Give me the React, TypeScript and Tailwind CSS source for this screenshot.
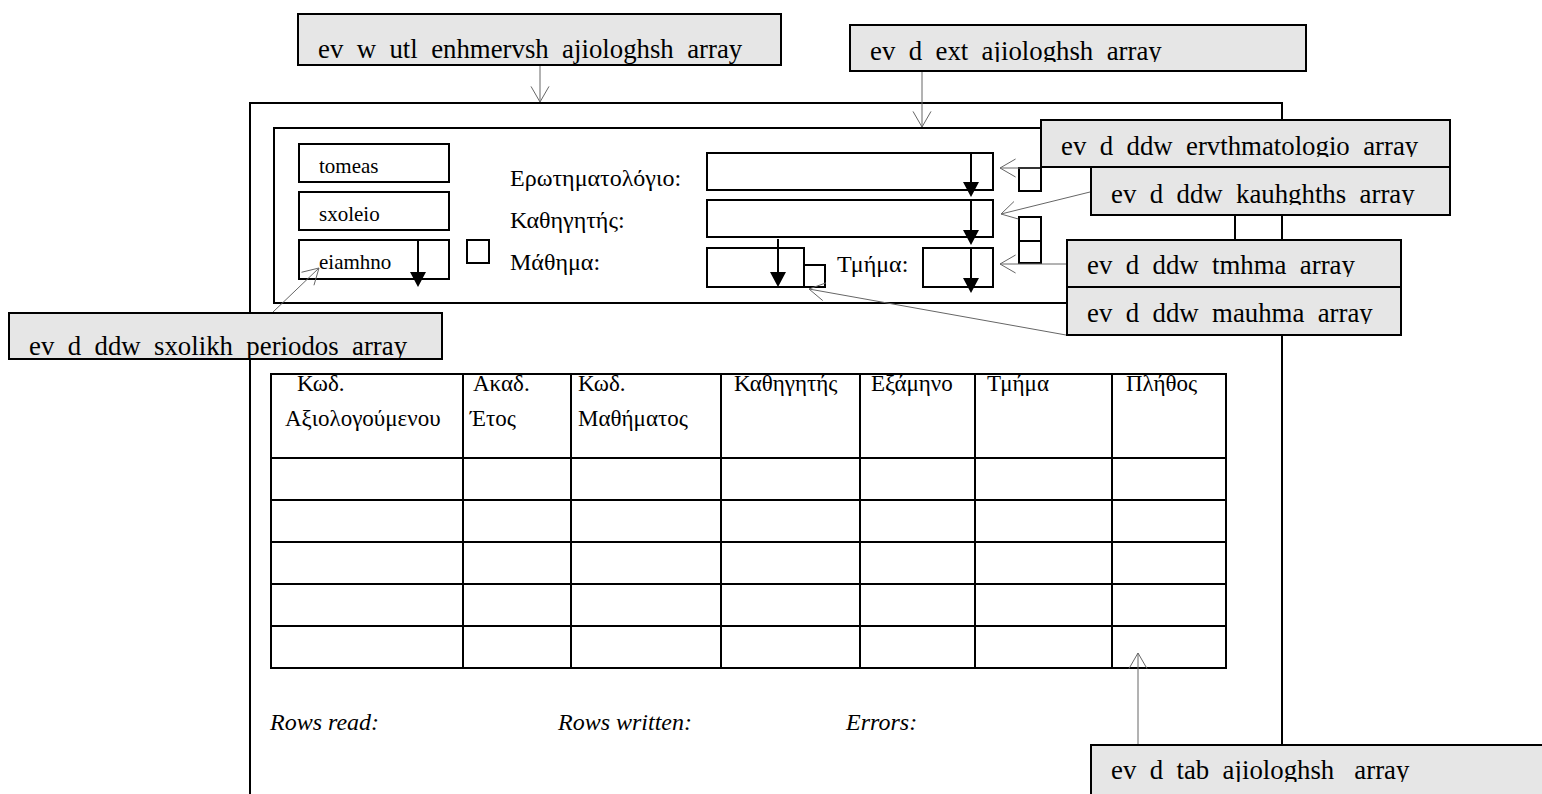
import React from "react";

type ArrowProps = { x1: number; y1: number; x2: number; y2: number };

function Connector({ x1, y1, x2, y2 }: ArrowProps) {
  const a = Math.atan2(y1 - y2, x1 - x2);
  const L = 18;
  const d = Math.PI / 6;
  const p1 = [x2 + L * Math.cos(a + d), y2 + L * Math.sin(a + d)];
  const p2 = [x2 + L * Math.cos(a - d), y2 + L * Math.sin(a - d)];
  return (
    <g stroke="#666" strokeWidth={1} fill="none">
      <line x1={x1} y1={y1} x2={x2} y2={y2} />
      <polyline points={`${p1[0]},${p1[1]} ${x2},${y2} ${p2[0]},${p2[1]}`} />
    </g>
  );
}

function DropArrow({ className, h }: { className: string; h: number }) {
  return (
    <svg
      className={`absolute overflow-visible ${className}`}
      width={16}
      height={h}
      viewBox={`0 0 16 ${h}`}
    >
      <line x1={8} y1={0} x2={8} y2={h - 14} stroke="#000" strokeWidth={2} />
      <polygon points={`0,${h - 15} 16,${h - 15} 8,${h}`} fill="#000" />
    </svg>
  );
}

function Callout({ box, inner, text }: { box: string; inner: string; text: string }) {
  return (
    <div className={`absolute border-2 border-black bg-[#e6e6e6] ${box}`}>
      <div className={`overflow-hidden whitespace-pre pl-[19px] text-[26.8px] leading-none ${inner}`}>
        {text}
      </div>
    </div>
  );
}

const headers: { l1: string; l2?: string; pad: string; pad2?: string }[] = [
  { l1: "Κωδ.", l2: "Αξιολογούμενου", pad: "pl-[25px]", pad2: "pl-[13px]" },
  { l1: "Ακαδ.", l2: "Έτος", pad: "pl-[9px]", pad2: "pl-[6px]" },
  { l1: "Κωδ.", l2: "Μαθήματος", pad: "pl-[6px]", pad2: "pl-[6px]" },
  { l1: "Καθηγητής", pad: "pl-[12px]" },
  { l1: "Εξάμηνο", pad: "pl-[10px]" },
  { l1: "Τμήμα", pad: "pl-[11px]" },
  { l1: "Πλήθος", pad: "pl-[13px]" },
];

export default function App() {
  return (
    <div className="relative h-[794px] w-[1542px] overflow-hidden bg-white font-['Liberation_Serif',serif] text-black">
      {/* Main window frame */}
      <div className="absolute left-[249px] top-[102px] h-[700px] w-[1034px] border-2 border-b-0 border-black">
        {/* Filter box */}
        <div className="ml-[22px] mt-[23px] flex h-[177px] w-[963px] border-2 border-black pl-[23px] pt-[14px]">
          {/* left text boxes */}
          <div className="flex w-[152px] flex-col gap-[8px] text-[21px] leading-none">
            <div className="h-[40px] border-2 border-black pl-[19px] pt-[11px]">tomeas</div>
            <div className="h-[40px] border-2 border-black pl-[19px] pt-[11px]">sxoleio</div>
            <div className="relative h-[41px] border-2 border-black pl-[19px] pt-[11px]">
              eiamhno
              <DropArrow className="left-[110px] -top-[2px]" h={48} />
            </div>
          </div>
          {/* checkbox */}
          <div className="ml-[16px] mt-[96px] h-[25px] w-[24px] border-2 border-black" />
          {/* labels */}
          <div className="ml-[20px] mt-[14px] flex w-[196px] flex-col text-[24px] leading-[42px]">
            <div>Ερωτηματολόγιο:</div>
            <div>Καθηγητής:</div>
            <div>Μάθημα:</div>
          </div>
          {/* inputs */}
          <div className="mt-[9px] flex w-[288px] flex-col">
            <div className="relative h-[39px] border-2 border-black">
              <DropArrow className="left-[255px] -top-[2px]" h={45} />
            </div>
            <div className="relative mt-[8px] h-[39px] border-2 border-black">
              <DropArrow className="left-[255px] -top-[2px]" h={46} />
            </div>
            <div className="mt-[9px] flex h-[41px]">
              <div className="relative h-[41px] w-[99px] border-2 border-black">
                <DropArrow className="left-[62px] -top-[10px]" h={48} />
              </div>
              <div className="h-[24px] w-[21px] self-end border-2 border-l-0 border-black" />
              <div className="ml-[11px] mt-[5px] text-[24px] leading-none">Τμήμα:</div>
              <div className="relative ml-auto h-[41px] w-[72px] border-2 border-black">
                <DropArrow className="left-[39px] -top-[2px]" h={46} />
              </div>
            </div>
          </div>
          {/* little boxes at right */}
          <div className="ml-[24px] flex w-[24px] flex-col">
            <div className="mt-[24px] h-[25px] border-2 border-black" />
            <div className="mt-[24px] h-[26px] border-2 border-black" />
            <div className="h-[22px] border-2 border-t-0 border-black" />
          </div>
        </div>

        {/* Table */}
        <div className="ml-[19px] mt-[69px] grid w-[957px] grid-cols-[192px_108px_150px_139px_115px_137px_114px] border-l-2 border-t-2 border-black text-[23px]">
          {headers.map((h, i) => (
            <div key={i} className="h-[84px] border-b-2 border-r-2 border-black">
              <div className="-mt-[9px] leading-[35px]">
                <div className={h.pad}>{h.l1}</div>
                {h.l2 && <div className={h.pad2}>{h.l2}</div>}
              </div>
            </div>
          ))}
          {Array.from({ length: 35 }).map((_, i) => (
            <div key={i} className="h-[42px] border-b-2 border-r-2 border-black" />
          ))}
        </div>

        {/* Status */}
        <div className="ml-[19px] mt-[41px] flex text-[24px] italic leading-none">
          <div className="w-[288px]">Rows read:</div>
          <div className="w-[288px]">Rows written:</div>
          <div>Errors:</div>
        </div>
      </div>

      {/* connectors */}
      <svg className="absolute left-0 top-0" width={1542} height={794}>
        <Connector x1={540} y1={66} x2={540} y2={102} />
        <Connector x1={922} y1={72} x2={922} y2={127} />
        <Connector x1={1040} y1={168} x2={1000} y2={168} />
        <Connector x1={1090} y1={192} x2={1001} y2={214} />
        <Connector x1={1066} y1={264} x2={1000} y2={264} />
        <Connector x1={1066} y1={335} x2={809} y2={289} />
        <Connector x1={273} y1={312} x2={319} y2={268} />
        <Connector x1={1138} y1={744} x2={1138} y2={653} />
      </svg>

      {/* callouts */}
      <Callout box="left-[297px] top-[13px] h-[53px] w-[485px]" inner="h-[49px] pt-[21px]" text="ev  w  utl  enhmervsh  ajiologhsh  array" />
      <Callout box="left-[849px] top-[24px] h-[48px] w-[458px]" inner="h-[36px] pt-[12px]" text="ev  d  ext  ajiologhsh  array" />
      <Callout box="left-[1040px] top-[119px] h-[49px] w-[411px]" inner="h-[36px] pt-[12px]" text="ev  d  ddw  ervthmatologio  array" />
      <Callout box="left-[1090px] top-[166px] h-[50px] w-[361px]" inner="h-[37px] pt-[13px]" text="ev  d  ddw  kauhghths  array" />
      <Callout box="left-[1066px] top-[239px] h-[49px] w-[336px]" inner="h-[36px] pt-[11px]" text="ev  d  ddw  tmhma  array" />
      <Callout box="left-[1066px] top-[286px] h-[50px] w-[336px]" inner="h-[36px] pt-[12px]" text="ev  d  ddw  mauhma  array" />
      <Callout box="left-[8px] top-[312px] h-[48px] w-[435px]" inner="h-[44px] pt-[19px]" text="ev  d  ddw  sxolikh  periodos  array" />
      <Callout box="left-[1090px] top-[744px] h-[60px] w-[460px]" inner="h-[36px] pt-[11px]" text="ev  d  tab  ajiologhsh   array" />
    </div>
  );
}
